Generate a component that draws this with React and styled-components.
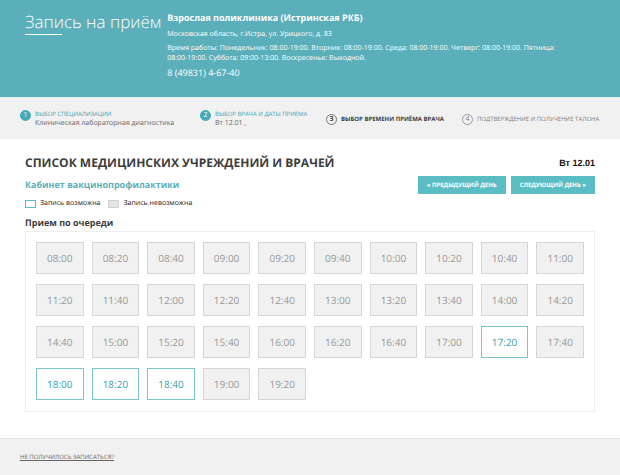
import styled, { createGlobalStyle } from "styled-components";

const GlobalStyle = createGlobalStyle`
  *, *::before, *::after {
    box-sizing: border-box;
  }
  body {
    margin: 0;
    background: #fff;
    color: #3d3d3d;
    font-family: "Open Sans", "Noto Sans", sans-serif;
    font-size: 7px;
    text-rendering: geometricPrecision;
  }
  h1, h2, h3, h4, p, ol {
    margin: 0;
    padding: 0;
  }
  button {
    font-family: inherit;
    text-rendering: inherit;
    cursor: pointer;
  }
`;

const Page = styled.div`
  display: flex;
  flex-direction: column;
  min-height: 100vh;
`;

const Header = styled.header`
  display: flex;
  gap: 6px;
  padding: 10px 45px 19px 25px;
  background: #5bafba;
  color: #fff;
`;

const Title = styled.h1`
  flex: none;
  font-size: 17px;
  font-weight: 300;
  line-height: 24px;
  white-space: nowrap;

  &::after {
    content: "";
    display: block;
    width: 37px;
    height: 1px;
    background: #fff;
  }
`;

const Clinic = styled.div`
  display: flex;
  flex-direction: column;
  gap: 4px;
  font-size: 7px;
  line-height: 10px;
`;

const ClinicName = styled.h2`
  font-size: 9px;
  font-weight: 700;
  line-height: 16px;
`;

const Phone = styled.p`
  font-size: 9px;
  line-height: 10px;
`;

const Steps = styled.ol`
  display: grid;
  grid-template-columns: 180fr 126fr 136fr 146fr;
  align-items: center;
  padding: 1px 12px 0 20px;
  height: 42px;
  background: #f1f1f1;
  border-top: 1px solid #e4eff1;
  list-style: none;
`;

const stepColors = {
  done: { text: "#46a3b0", ring: "#46a9b6", fill: "#46a9b6", number: "#fff" },
  current: { text: "#3d3d3d", ring: "#777", fill: "transparent", number: "#3d3d3d" },
  next: { text: "#7c7c7c", ring: "#999", fill: "transparent", number: "#7c7c7c" },
};

const Step = styled.li`
  display: flex;
  align-items: ${(props) => (props.$state === "done" ? "flex-start" : "center")};
  gap: 4px;
  color: ${(props) => stepColors[props.$state].text};
  font-size: 6px;
  font-weight: ${(props) => (props.$state === "current" ? 700 : 400)};
  line-height: 9px;
  white-space: nowrap;
`;

const StepNumber = styled.span`
  display: flex;
  flex: none;
  align-items: center;
  justify-content: center;
  width: 11px;
  height: 11px;
  border: 1px solid ${(props) => stepColors[props.$state].ring};
  border-radius: 50%;
  background: ${(props) => stepColors[props.$state].fill};
  color: ${(props) => stepColors[props.$state].number};
  font-size: 7px;
`;

const StepValue = styled.div`
  color: #666;
  font-size: 7px;
`;

const Main = styled.main`
  flex: 1;
  padding: 14px 25px 26px;
`;

const TitleRow = styled.div`
  display: flex;
  justify-content: space-between;
  align-items: center;
`;

const PageTitle = styled.h2`
  font-size: 12px;
  font-weight: 700;
  line-height: 20px;
`;

const CurrentDay = styled.strong`
  color: #111;
  font-family: "Liberation Sans", Arial, sans-serif;
  font-size: 9px;
  line-height: 20px;
`;

const DoctorRow = styled.div`
  display: flex;
  justify-content: space-between;
  align-items: center;
  margin-top: 3px;
`;

const DoctorName = styled.h3`
  color: #5bafba;
  font-size: 9px;
  font-weight: 700;
  line-height: 14px;
`;

const DayNav = styled.nav`
  display: flex;
  gap: 5px;
`;

const DayButton = styled.button`
  height: 18px;
  padding: 0 9px;
  border: 0;
  background: #5bbdc4;
  color: #fff;
  font-size: 6px;
  font-weight: 700;
`;

const Legend = styled.div`
  display: flex;
  gap: 8px;
  margin-top: 5px;
`;

const LegendItem = styled.div`
  display: flex;
  align-items: center;
  gap: 4px;
  color: #222;
  font-size: 7px;
  line-height: 10px;

  &::before {
    content: "";
    width: 11px;
    height: 8px;
    border: 1px solid ${(props) => (props.$free ? "#5bbdc4" : "#d0d0d0")};
    background: ${(props) => (props.$free ? "#fff" : "#e4e4e4")};
  }
`;

const QueueTitle = styled.h4`
  margin-top: 7px;
  font-size: 9px;
  font-weight: 700;
  line-height: 14px;
`;

const Slots = styled.div`
  display: grid;
  grid-template-columns: repeat(10, 1fr);
  gap: 10px 8px;
  margin-top: 1px;
  padding: 10px 10px 11px;
  border: 1px solid #eee;
`;

const Slot = styled.button`
  height: 32px;
  padding: 0;
  border: 1px solid #7ac6cc;
  background: #fff;
  color: #3aa3b1;
  font-size: 10px;

  &:disabled {
    border-color: #d6d6d6;
    background: #f1f1f1;
    color: #999;
    cursor: default;
  }
`;

const Footer = styled.footer`
  padding: 12px 20px 11px;
  border-top: 1px solid #e2e2e2;
  background: #f1f1f1;
  line-height: 12px;
`;

const HelpLink = styled.a`
  color: #666;
  font-size: 6px;
`;

const steps = [
  { title: "ВЫБОР СПЕЦИАЛИЗАЦИИ", value: "Клиническая лабораторная диагностика", state: "done" },
  { title: "ВЫБОР ВРАЧА И ДАТЫ ПРИЕМА", value: "Вт 12.01 ,", state: "done" },
  { title: "ВЫБОР ВРЕМЕНИ ПРИЁМА ВРАЧА", state: "current" },
  { title: "ПОДТВЕРЖДЕНИЕ И ПОЛУЧЕНИЕ ТАЛОНА", state: "next" },
];

const freeTimes = ["17:20", "18:00", "18:20", "18:40"];

// every 20 minutes, from 08:00 to 19:20
const times = Array.from({ length: 35 }, (_, i) => {
  const minutes = 8 * 60 + i * 20;
  const h = String(Math.floor(minutes / 60)).padStart(2, "0");
  const m = String(minutes % 60).padStart(2, "0");
  return `${h}:${m}`;
});

function App() {
  return (
    <Page>
      <GlobalStyle />
      <Header>
        <Title>Запись на приём</Title>
        <Clinic>
          <ClinicName>Взрослая поликлиника (Истринская РКБ)</ClinicName>
          <p>Московская область, г.Истра, ул. Урицкого, д. 83</p>
          <p>
            Время работы: Понедельник: 08:00-19:00. Вторник: 08:00-19:00. Среда: 08:00-19:00.
            Четверг: 08:00-19:00. Пятница: 08:00-19:00. Суббота: 09:00-13:00. Воскресенье: Выходной.
          </p>
          <Phone>8 (49831) 4-67-40</Phone>
        </Clinic>
      </Header>

      <Steps>
        {steps.map((step, i) => (
          <Step key={step.title} $state={step.state}>
            <StepNumber $state={step.state}>{i + 1}</StepNumber>
            <div>
              {step.title}
              {step.value && <StepValue>{step.value}</StepValue>}
            </div>
          </Step>
        ))}
      </Steps>

      <Main>
        <TitleRow>
          <PageTitle>СПИСОК МЕДИЦИНСКИХ УЧРЕЖДЕНИЙ И ВРАЧЕЙ</PageTitle>
          <CurrentDay>Вт 12.01</CurrentDay>
        </TitleRow>
        <DoctorRow>
          <DoctorName>Кабинет вакцинопрофилактики</DoctorName>
          <DayNav>
            <DayButton type="button">« ПРЕДЫДУЩИЙ ДЕНЬ</DayButton>
            <DayButton type="button">СЛЕДУЮЩИЙ ДЕНЬ »</DayButton>
          </DayNav>
        </DoctorRow>
        <Legend>
          <LegendItem $free>Запись возможна</LegendItem>
          <LegendItem>Запись невозможна</LegendItem>
        </Legend>

        <QueueTitle>Прием по очереди</QueueTitle>
        <Slots>
          {times.map((time) => (
            <Slot key={time} type="button" disabled={!freeTimes.includes(time)}>
              {time}
            </Slot>
          ))}
        </Slots>
      </Main>

      <Footer>
        <HelpLink href="#help">НЕ ПОЛУЧИЛОСЬ ЗАПИСАТЬСЯ?</HelpLink>
      </Footer>
    </Page>
  );
}

export default App;
